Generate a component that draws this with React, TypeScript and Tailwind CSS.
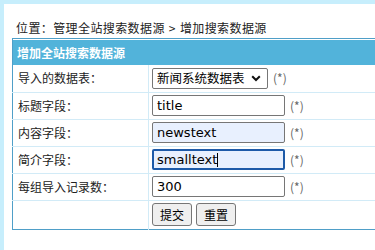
const font = { fontFamily: '"DejaVu Sans", Verdana, "Noto Sans CJK SC", sans-serif' };

type Field = { label: string; value: string; filled?: boolean; focused?: boolean };

const fields: Field[] = [
  { label: '标题字段：', value: 'title' },
  { label: '内容字段：', value: 'newstext', filled: true },
  { label: '简介字段：', value: 'smalltext', filled: true, focused: true },
  { label: '每组导入记录数：', value: '300' },
];

function Star() {
  return <span className="ml-[5px] text-[12px] text-[#666]">(*)</span>;
}

export default function App() {
  return (
    <div
      className="w-[375px] h-[250px] overflow-hidden bg-[#c7eefc] pl-[4px] pt-[4px] text-[12px] text-[#222]"
      style={{ fontFamily: '"Noto Sans CJK SC", "DejaVu Sans", sans-serif' }}
    >
      <div className="h-full bg-white pl-[8px] pt-[15px]">
        <div className="pl-[4px] h-[17px] leading-[17px] tracking-[0.4px]">
          位置：管理全站搜索数据源<span className="mx-[4px]">&gt;</span>增加搜索数据源
        </div>
        <table className="mt-[2px] w-[420px] border border-[#4f9fc8] border-collapse">
          <tbody>
            <tr>
              <td colSpan={2} className="p-0">
                <div className="mt-[1px] h-[25px] bg-[#52b3da] pl-[4px] font-bold text-white leading-[25px]">
                  增加全站搜索数据源
                </div>
              </td>
            </tr>
            <tr className="h-[27px] border-b border-[#d2ebf7]">
              <td className="w-[136px] pl-[5px] border-r border-[#d2ebf7]">导入的数据表：</td>
              <td className="pl-[3px]">
                <div className="flex items-center">
                  <div className="w-[116px] h-[21px] flex items-center justify-between border border-[#767676] rounded-[2px] bg-white pl-[4px] pr-[6px] text-[12.5px] text-black">
                    <span>新闻系统数据表</span>
                    <svg width="10" height="7" viewBox="0 0 10 7">
                      <path d="M1.2 1.2 L5 5 L8.8 1.2" stroke="#111" strokeWidth="2" fill="none" />
                    </svg>
                  </div>
                  <Star />
                </div>
              </td>
            </tr>
            {fields.map((f) => (
              <tr key={f.label} className="h-[27px] border-b border-[#d2ebf7]">
                <td className="pl-[5px] border-r border-[#d2ebf7]">{f.label}</td>
                <td className="pl-[3px]">
                  <div className="flex items-center">
                    <div
                      className={`w-[133px] h-[21px] flex items-center rounded-[2px] text-[13px] text-black ${
                        f.focused
                          ? 'border-2 border-[#1d5aa8] bg-[#e8f0fe] pl-[3px]'
                          : f.filled
                          ? 'border border-[#767676] bg-[#e8f0fe] pl-[4px]'
                          : 'border border-[#767676] bg-white pl-[4px]'
                      }`}
                      style={font}
                    >
                      {f.value}
                      {f.focused && <span className="w-px h-[14px] bg-black" />}
                    </div>
                    <Star />
                  </div>
                </td>
              </tr>
            ))}
            <tr className="h-[29px]">
              <td className="border-r border-[#d2ebf7]"></td>
              <td className="pl-[3px]">
                <div className="flex gap-[4px]">
                  <button className="w-[40px] h-[23px] border border-[#767676] rounded-[3px] bg-[#efefef] text-[12px] text-black">
                    提交
                  </button>
                  <button className="w-[40px] h-[23px] border border-[#767676] rounded-[3px] bg-[#efefef] text-[12px] text-black">
                    重置
                  </button>
                </div>
              </td>
            </tr>
          </tbody>
        </table>
      </div>
    </div>
  );
}
